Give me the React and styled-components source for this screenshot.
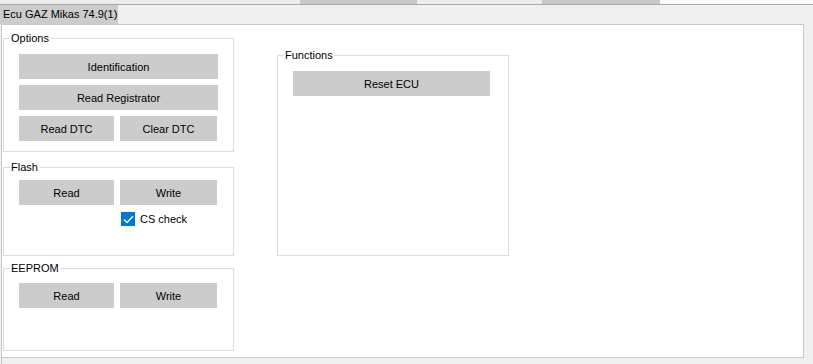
import React from "react"
import styled, { createGlobalStyle } from "styled-components"

const GlobalStyle = createGlobalStyle`
  html, body {
    margin: 0;
    padding: 0;
    background: #f0f0f0;
    font-family: "Liberation Sans", Arial, sans-serif;
    font-size: 11px;
    color: #000;
  }
`

const outerTabs = [
  { width: 300, tone: "light" },
  { width: 117, tone: "dark" },
  { width: 5, tone: "light" },
  { width: 118, tone: "light" },
  { width: 2, tone: "light" },
  { width: 118, tone: "dark" },
  { width: 153, tone: "white" },
]

const toneColors = { light: "#ececec", dark: "#c8c8c8", white: "#fbfbfb" }

function GroupBox({ title, height, top, width, padTop, children }) {
  return (
    <Group $height={height} $top={top} $width={width}>
      <Legend>{title}</Legend>
      <GroupBody $padTop={padTop}>{children}</GroupBody>
    </Group>
  )
}

function CheckBox({ label, checked }) {
  return (
    <CheckRow>
      <Box $checked={checked}>
        {checked && (
          <svg width="11" height="9" viewBox="0 0 11 9">
            <path d="M1 4.5 L4 7.5 L10 1.2" fill="none" stroke="#fff" strokeWidth="1.4" />
          </svg>
        )}
      </Box>
      <span>{label}</span>
    </CheckRow>
  )
}

export default function App() {
  return (
    <Window>
      <GlobalStyle />
      <OuterStrip>
        {outerTabs.map((t, i) => (
          <OuterTab key={i} style={{ width: t.width }} $tone={t.tone} />
        ))}
      </OuterStrip>
      <TabStrip>
        <Tab $active>Ecu GAZ Mikas 74.9(1)</Tab>
      </TabStrip>
      <Page>
        <LeftColumn>
          <GroupBox title="Options" height={121} top={0} padTop={8}>
            <Stack>
              <Button>Identification</Button>
              <Button>Read Registrator</Button>
              <Pair>
                <Button>Read DTC</Button>
                <Button>Clear DTC</Button>
              </Pair>
            </Stack>
          </GroupBox>
          <GroupBox title="Flash" height={96} top={8} padTop={5}>
            <Pair>
              <Button>Read</Button>
              <Button>Write</Button>
              <CheckCell>
                <CheckBox label="CS check" checked />
              </CheckCell>
            </Pair>
          </GroupBox>
          <GroupBox title="EEPROM" height={90} top={5} padTop={7}>
            <Pair>
              <Button>Read</Button>
              <Button>Write</Button>
            </Pair>
          </GroupBox>
        </LeftColumn>
        <GroupBox title="Functions" height={208} top={17} width={232} padTop={8}>
          <Button $width={197}>Reset ECU</Button>
        </GroupBox>
      </Page>
      <BottomPanel />
    </Window>
  )
}

const Window = styled.div`
  width: 813px;
  height: 364px;
  overflow: hidden;
  display: flex;
  flex-direction: column;
`

const OuterStrip = styled.div`
  display: flex;
  height: 4px;
  border-bottom: 1px solid #a8a8a8;
`

const OuterTab = styled.div`
  height: 4px;
  background: ${(p) => toneColors[p.$tone]};
`

const TabStrip = styled.div`
  display: flex;
  height: 19px;
`

const Tab = styled.div`
  width: 115px;
  padding-left: 3px;
  line-height: 19px;
  background: ${(p) => (p.$active ? "#cccccc" : "transparent")};
  white-space: nowrap;
`

const Page = styled.div`
  margin-left: 1px;
  width: 803px;
  height: 334px;
  flex-shrink: 0;
  background: #fff;
  border: 1px solid #c8c8c8;
  padding: 6px 0 0 1px;
  box-sizing: border-box;
  display: flex;
  align-items: flex-start;
  gap: 43px;
`

const LeftColumn = styled.div`
  display: flex;
  flex-direction: column;
  width: 231px;
`

const Group = styled.fieldset`
  box-sizing: border-box;
  margin: ${(p) => p.$top}px 0 0 0;
  padding: 0;
  min-width: 0;
  width: ${(p) => p.$width || 231}px;
  height: ${(p) => p.$height}px;
  border: 1px solid #dcdcdc;
`

const Legend = styled.legend`
  margin-left: 6px;
  padding: 0 1px;
  line-height: 15px;
  height: 15px;
`

const GroupBody = styled.div`
  padding: ${(p) => p.$padTop}px 15px 0 15px;
`

const Stack = styled.div`
  display: flex;
  flex-direction: column;
  gap: 6px;
`

const Pair = styled.div`
  display: grid;
  grid-template-columns: 95px 97px;
  column-gap: 6px;
  row-gap: 7px;
`

const Button = styled.div`
  box-sizing: border-box;
  height: 25px;
  width: ${(p) => (p.$width ? `${p.$width}px` : "auto")};
  background: #cccccc;
  display: flex;
  align-items: center;
  justify-content: center;
  white-space: nowrap;
`

const CheckCell = styled.div`
  grid-column: 2;
  padding-left: 1px;
`

const CheckRow = styled.label`
  display: flex;
  align-items: center;
  gap: 5px;
  height: 14px;
`

const Box = styled.span`
  width: 14px;
  height: 14px;
  box-sizing: border-box;
  background: ${(p) => (p.$checked ? "#0078d7" : "#fff")};
  border: 1px solid ${(p) => (p.$checked ? "#0078d7" : "#333")};
  display: flex;
  align-items: center;
  justify-content: center;
`

const BottomPanel = styled.div`
  flex: 1;
  margin-left: 1px;
  border-left: 1px solid #c8c8c8;
  background: #f0f0f0;
`
